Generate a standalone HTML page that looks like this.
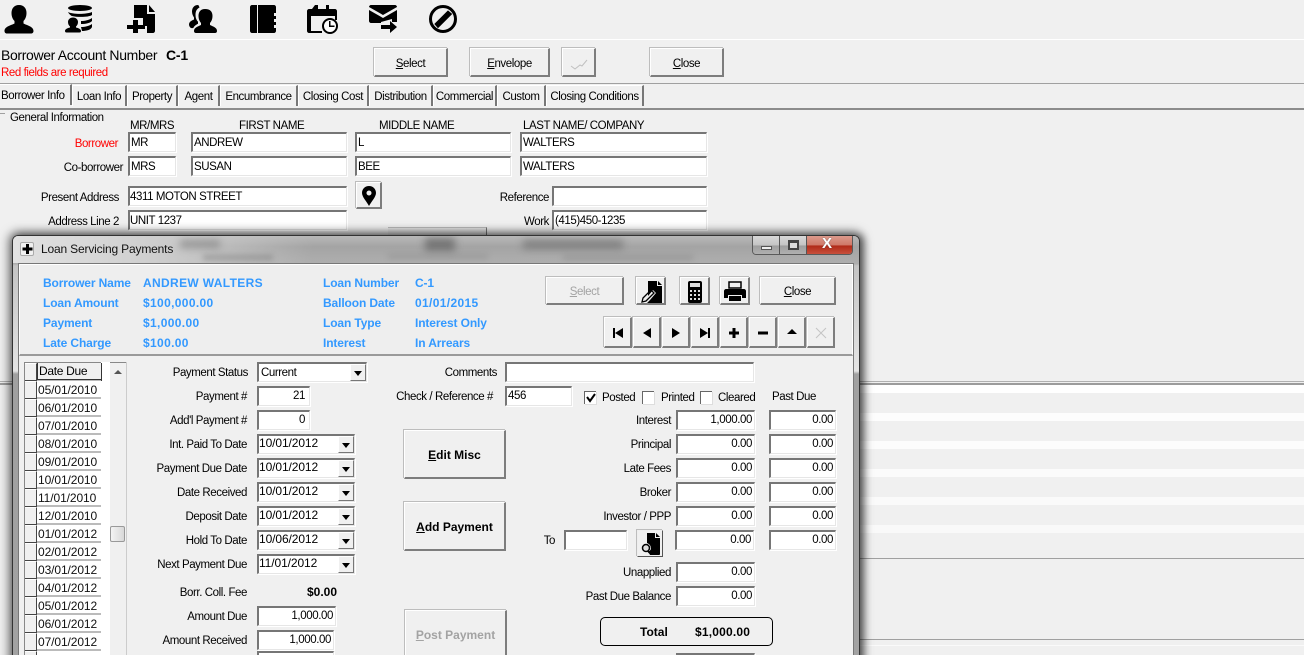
<!DOCTYPE html>
<html><head><meta charset="utf-8"><style>
html,body{margin:0;padding:0;width:1304px;height:655px;overflow:hidden}
body{background:#f0f0f0;font:11.5px/16px "Liberation Sans",sans-serif;letter-spacing:-.42px;color:#000}
div{position:absolute;box-sizing:border-box;white-space:nowrap}
#r{left:0;top:0;width:1304px;height:655px;overflow:hidden;background:#f0f0f0}
.l{width:200px;text-align:right;height:14px}
.f{background:#fff;border-top:2px solid #767676;border-left:2px solid #767676;border-right:1px solid #e6e6e6;border-bottom:1px solid #e6e6e6;box-shadow:1px 1px 0 #fff;padding-left:1px;line-height:17px;height:20px;overflow:hidden}
.t1{line-height:19px}
.n{text-align:right;padding:0 4px 0 0;letter-spacing:-.4px}
.dt{font-size:12px;letter-spacing:-.1px;padding-left:0;line-height:15px}
.b{background:#f0f0f0;border-top:1px solid #fff;border-left:1px solid #fff;border-right:2px solid #7d7d7d;border-bottom:2px solid #7d7d7d;box-shadow:-1px -1px 0 #bdbdbd;text-align:center}
.bd{font-size:12px;font-weight:bold;letter-spacing:0}
.d{color:#a3a3a3}
.ar{right:0;top:0;bottom:0;width:16px;background:#f0f0f0;border-left:1px solid #fff;border-top:1px solid #fff;border-right:1px solid #777;border-bottom:1px solid #777}
.ar:after{content:"";position:absolute;left:3px;top:6px;border:4px solid transparent;border-top:5px solid #000;border-bottom:0}
.bl{color:#3399ff;font-size:12px;line-height:14px;font-weight:bold;letter-spacing:-.12px;height:14px}
.bv{letter-spacing:.35px}
.g{left:37px;width:64px;height:18px;background:#fff;border-bottom:1px solid #bbb;border-top:1px solid #bbb;padding-left:1px;line-height:18px;color:#111;font-size:12px;letter-spacing:-.1px}
.h{left:25px;width:12px;height:18px;background:#f0f0f0;border-right:1px solid #444;border-bottom:1px solid #444;border-top:1px solid #fff}
.tb{top:85px;height:21px;background:#f0f0f0;border-top:1px solid #fff;border-left:1px solid #fff;border-right:2px solid #777;text-align:center;line-height:23px}
.cb{width:12px;height:13px;background:#fff;border-top:1px solid #666;border-left:1px solid #666;box-shadow:1px 1px 0 #ddd}
.wl{left:860px;width:444px;height:8px}
</style></head><body><div id="r">

<svg style="position:absolute;left:0;top:0" width="480" height="40" viewBox="0 0 480 40">
<path d="M19 5c-5 0-7.500 3.500-7.500 8 0 3.500 1.200 6.300 3 8v2.500c-4 2-10 3.200-10 7.500 0 1.500 1 2.500 2.500 2.500h24c1.500 0 2.500-1 2.500-2.500 0-4.300-6-5.500-10-7.500V21c1.800-1.700 3-4.500 3-8 0-4.500-2.500-8-7.500-8z"/>
<ellipse cx="80" cy="8" rx="12" ry="3"/>
<path d="M68 12c5 2.500 18 2.500 24 0v3c-3 2.200-14 2.500-20 1-1-.2-3-2-4-4zM81 21c4 0 8-1 11-3v3c-2 2-6 3-11 3zM81 27c4 0 8-1 11-3v3c-1 3-6 4-10 4z"/>
<path d="M73 17.500c-3 0-5 2-5 4.500 0 2 .8 3.500 2 4.500v1c-2.500.7-5 1.500-5 3.500 0 1 .5 1.500 1.500 1.500h13c1 0 1.500-.5 1.500-1.500 0-2-2.500-2.800-5-3.500v-1c1.200-1 2-2.500 2-4.500 0-2.500-2-4.500-5-4.500z"/>
<path d="M134 5h13v9h8v17c0 1-1 2-2 2h-6v-7h-4v-8h-9zM149 5l6 7h-6z"/>
<path d="M133 20h5v5h7v4h-7v4h-5v-4h-6v-4h6z"/>
<path d="M205 9c-4.500 0-6.500 3-6.500 7 0 3 1 5.300 2.500 7v2c-3 1.500-7 2.500-7 6 0 1.200.8 2 2 2h19c1.200 0 2-.8 2-2 0-3.500-4-4.500-7-6v-2c1.500-1.700 2.500-4 2.500-7 0-4-2-7-7.500-7z"/>
<path d="M198 5c-4 0-6 3-6 6.500 0 2.500 1 4.500 2 6v2c-2 1-5 2-5 5 0 1.500 1 3 2 3.500 1 .3 2 .2 2.500-.3.500-1.500 2.500-3 4.500-4v-2c-1.500-1.500-2.500-3.700-2.500-6.700 0-3.500 1-6 4-7.500-.5-1.500-1-2.500-1.500-2.500z"/>
<path d="M252 5h5v28h-5c-1 0-2-1-2-2V7c0-1 1-2 2-2zM258 5h16c1 0 2 1 2 2v6h-2v3h2v3h-2v3h2v3h-2v3h2v3c0 1-1 2-2 2h-16z"/>
<path fill-rule="evenodd" d="M315 5h3v4h8V5h3v4h6c1 0 2 1 2 2v9h-2v-4h-24v15h11v2h-13c-1 0-2-1-2-2V11c0-1 1-2 2-2h3z"/>
<circle cx="330" cy="26" r="7" fill="#fff" stroke="#000" stroke-width="2"/><path d="M329 21h1.500v4.500h4V27H329z"/>
<path d="M371 5h24c1 0 2 1 2 2L383 15 369 7c0-1 1-2 2-2zM369 10l14 8 14-8v12h-5v-3l-11 3v1h-10c-1 0-2-1-2-2z"/>
<path d="M381 25h9v-4l7 6-7 6v-4h-9z"/>
<circle cx="443" cy="19" r="12.500" fill="none" stroke="#000" stroke-width="3"/>
<path d="M435 24L448 11 451.500 14 438 27.500z" stroke="#000" stroke-width="1"/>
</svg>

<div style="left:0;top:39px;width:1304px;height:1px;background:#fff"></div>
<div style="left:1px;top:48px;font-size:14px;line-height:15px;letter-spacing:-.35px">Borrower Account Number</div>
<div style="left:166px;top:48px;font-size:14px;line-height:15px;font-weight:bold;letter-spacing:-.2px">C-1</div>
<div style="left:1px;top:65px;color:#f00;height:14px">Red fields are required</div>

<div class="b" style="left:374px;top:48px;width:74px;height:29px;line-height:30px"><u>S</u>elect</div>
<div class="b" style="left:470px;top:48px;width:80px;height:29px;line-height:30px"><u>E</u>nvelope</div>
<div class="b" style="left:562px;top:48px;width:34px;height:29px"><svg width="20" height="20" style="margin-top:4px" fill="none" stroke="#c0c0c0"><path d="M2 13l4 3 5-4 2 1 5-6"/></svg></div>
<div class="b" style="left:650px;top:48px;width:74px;height:29px;line-height:30px"><u>C</u>lose</div>

<div style="left:0;top:83px;width:1304px;height:1px;background:#a0a0a0"></div>
<div class="tb" style="left:0;top:84px;width:72px;border-left:0;line-height:22px;text-align:left;padding-left:1px">Borrower Info</div>
<div class="tb" style="left:72px;width:55px">Loan Info</div>
<div class="tb" style="left:127px;width:51px">Property</div>
<div class="tb" style="left:178px;width:42px">Agent</div>
<div class="tb" style="left:220px;width:78px">Encumbrance</div>
<div class="tb" style="left:298px;width:71px">Closing Cost</div>
<div class="tb" style="left:369px;width:64px">Distribution</div>
<div class="tb" style="left:433px;width:64px">Commercial</div>
<div class="tb" style="left:497px;width:49px">Custom</div>
<div class="tb" style="left:546px;width:98px">Closing Conditions</div>
<div style="left:0;top:108px;width:1304px;height:2px;background:#8c8c8c"></div>

<div style="left:0;top:113px;width:5px;height:1px;background:#a0a0a0"></div>
<div style="left:10px;top:110px;">General Information</div>
<div style="left:130px;top:118px">MR/MRS</div>
<div style="left:239px;top:118px">FIRST NAME</div>
<div style="left:379px;top:118px">MIDDLE NAME</div>
<div style="left:523px;top:118px">LAST NAME/ COMPANY</div>
<div class="l" style="left:-82px;top:136px;color:#f00">Borrower</div>
<div class="l" style="left:-77px;top:160px">Co-borrower</div>
<div class="l" style="left:-81px;top:190px">Present Address</div>
<div class="l" style="left:-81px;top:214px">Address Line 2</div>
<div class="l" style="left:349px;top:190px">Reference</div>
<div class="l" style="left:349px;top:214px">Work</div>
<div class="f t1" style="left:128px;top:132px;width:48px">MR</div>
<div class="f t1" style="left:191px;top:132px;width:156px">ANDREW</div>
<div class="f t1" style="left:355px;top:132px;width:156px">L</div>
<div class="f t1" style="left:520px;top:132px;width:187px">WALTERS</div>
<div class="f t1" style="left:128px;top:156px;width:48px">MRS</div>
<div class="f t1" style="left:191px;top:156px;width:156px">SUSAN</div>
<div class="f t1" style="left:355px;top:156px;width:156px">BEE</div>
<div class="f t1" style="left:520px;top:156px;width:187px">WALTERS</div>
<div class="f t1" style="left:128px;top:186px;width:219px;padding-left:0">4311 MOTON STREET</div>
<div class="f t1" style="left:552px;top:186px;width:155px"></div>
<div class="f t1" style="left:128px;top:210px;width:219px;padding-left:0">UNIT 1237</div>
<div class="f t1" style="left:552px;top:210px;width:155px">(415)450-1235</div>
<div class="b" style="left:356px;top:182px;width:26px;height:27px"><svg width="14" height="20" style="margin-top:3px"><path fill-rule="evenodd" d="M7 0c4 0 7 3 7 7 0 4-5 9-7 13C5 16 0 11 0 7c0-4 3-7 7-7zm0 4.500a2.500 2.500 0 1 0 .01 0z"/></svg></div>
<div style="left:388px;top:227px;width:99px;height:10px;background:#e8e8e8;border-top:1px solid #bbb;border-right:1px solid #777"></div>

<!-- lower background -->
<div style="left:0;top:381px;width:1304px;height:1px;background:#b0b0b0"></div>
<div style="left:0;top:383px;width:1304px;height:2px;background:#9c9c9c"></div>
<div class="wl" style="top:385px;background:#fff"></div>
<div class="wl" style="top:413px;background:#fdfdfd"></div>
<div class="wl" style="top:441px;background:#fcfcfc"></div>
<div class="wl" style="top:469px;background:#fbfbfb"></div>
<div class="wl" style="top:497px;background:#fafafa"></div>
<div class="wl" style="top:525px;background:#f9f9f9"></div>
<div style="left:860px;top:558px;width:444px;height:1px;background:#a0a0a0"></div>
<div style="left:860px;top:639px;width:444px;height:1px;background:#a0a0a0"></div>
<div style="left:860px;top:645px;width:444px;height:1px;background:#fafafa"></div>

<!-- window -->
<div style="left:12px;top:235px;width:848px;height:440px;border-radius:6px 6px 0 0;box-shadow:0 0 10px 3px rgba(0,0,0,.55),3px 0 8px rgba(0,0,0,.4);border:1px solid #333;background:linear-gradient(180deg,#b0b0b0 0,#a2a2a2 8px,#a8a8a8 27px,#c4c4c4 30px,#e4e4e4 135px,#a0a0a0 138px,#a2a2a2 100%)"></div>
<div style="left:13px;top:236px;width:846px;height:27px;border-radius:5px 5px 0 0;overflow:hidden;background:linear-gradient(180deg,#b8b8b8,#a4a4a4 40%,#aeaeae)">
  <div style="left:0;top:0;width:300px;height:27px;background:linear-gradient(90deg,#e2e2e2,#cfcfcf 45%,rgba(180,180,180,0))"></div>
  <div style="left:412px;top:2px;width:30px;height:13px;background:#606060;filter:blur(4px);opacity:.7"></div>
  <div style="left:510px;top:4px;width:100px;height:9px;background:#707070;filter:blur(4px);opacity:.7"></div>
  <div style="left:167px;top:4px;width:40px;height:8px;background:#777;filter:blur(4px);opacity:.6"></div>
  <div style="left:190px;top:19px;width:70px;height:5px;background:#777;filter:blur(3px);opacity:.5"></div>
  <div style="left:375px;top:18px;width:100px;height:5px;background:#888;filter:blur(3px);opacity:.4"></div>
  <div style="left:550px;top:19px;width:130px;height:5px;background:#888;filter:blur(3px);opacity:.5"></div>
</div>
<div style="left:20px;top:242px;width:14px;height:14px;background:#f0f0f0;border:1px solid #aaa;border-radius:2px"><svg width="12" height="12" style="position:absolute;left:0;top:0"><path d="M5 1h3v3.500h3.500v3H8V11H5V7.500H1.500v-3H5z" fill="#000"/></svg></div>
<div style="left:41px;top:242px;color:#111;font-size:12px;line-height:14px;letter-spacing:-.17px">Loan Servicing Payments</div>
<div style="left:752px;top:236px;width:101px;height:19px;border:1px solid #5a5a5a;border-top:0;border-radius:0 0 4px 4px;overflow:hidden">
  <div style="left:0;top:0;width:27px;height:18px;border-right:1px solid #555;background:linear-gradient(180deg,#d8d8d8,#c4c4c4 50%,#9e9e9e 55%,#b0b0b0)"></div>
  <div style="left:27px;top:0;width:27px;height:18px;border-right:1px solid #555;background:linear-gradient(180deg,#d8d8d8,#c4c4c4 50%,#9e9e9e 55%,#b0b0b0)"></div>
  <div style="left:54px;top:0;width:46px;height:18px;background:linear-gradient(180deg,#dc9a8c,#cf7868 50%,#b02a18 55%,#c8503c)"></div>
  <div style="left:8px;top:10px;width:11px;height:4px;background:#eee;border:1px solid #555"></div>
  <div style="left:35px;top:4px;width:11px;height:10px;border:2px solid #444;border-top-width:3px;background:#ddd"></div>
  <div style="left:69px;top:0;font-weight:bold;font-size:15px;color:#fff;text-shadow:0 0 1px #444">X</div>
</div>

<div style="left:18px;top:263px;width:835px;height:400px;background:#f0f0f0;border-left:1px solid #777;border-top:1px solid #777"></div>
<div style="left:19px;top:264px;width:834px;height:92px;border:1px solid #fff;border-bottom:2px solid #9a9a9a;border-top:1px solid #fff;background:#eee"></div>
<div style="left:853px;top:263px;width:1px;height:400px;background:#777"></div>

<div class="bl" style="left:43px;top:276px">Borrower Name</div>
<div class="bl" style="left:43px;top:296px">Loan Amount</div>
<div class="bl" style="left:43px;top:316px">Payment</div>
<div class="bl" style="left:43px;top:336px">Late Charge</div>
<div class="bl bv" style="left:143px;top:276px">ANDREW WALTERS</div>
<div class="bl bv" style="left:143px;top:296px">$100,000.00</div>
<div class="bl bv" style="left:143px;top:316px">$1,000.00</div>
<div class="bl bv" style="left:143px;top:336px">$100.00</div>
<div class="bl" style="left:323px;top:276px">Loan Number</div>
<div class="bl" style="left:323px;top:296px">Balloon Date</div>
<div class="bl" style="left:323px;top:316px">Loan Type</div>
<div class="bl" style="left:323px;top:336px">Interest</div>
<div class="bl" style="left:415px;top:276px">C-1</div>
<div class="bl bv" style="left:415px;top:296px">01/01/2015</div>
<div class="bl" style="left:415px;top:316px">Interest Only</div>
<div class="bl" style="left:415px;top:336px">In Arrears</div>

<div class="b d" style="left:546px;top:277px;width:78px;height:28px;line-height:29px"><u>S</u>elect</div>
<div class="b" style="left:636px;top:277px;width:30px;height:28px"><svg width="24" height="24" style="position:absolute;left:3px;top:2px"><path d="M8 1h9v5h5v17H7l3-3 6-7-3-3-5 6z"/><path d="M18 1l4 4h-4z"/><path d="M2 22l1-4 8-8 3 3-8 8z" fill="none" stroke="#000" stroke-width="1.300"/></svg></div>
<div class="b" style="left:680px;top:277px;width:30px;height:28px"><svg width="16" height="24" style="margin-top:2px"><rect x="1" y="1" width="14" height="22" rx="2"/><rect x="3" y="3" width="10" height="4" fill="#ddd"/><path d="M3 10h2v2H3zM7 10h2v2H7zM11 10h2v2h-2zM3 14h2v2H3zM7 14h2v2H7zM11 14h2v2h-2zM3 18h2v2H3zM7 18h2v2H7zM11 18h2v2h-2z" fill="#ddd"/></svg></div>
<div class="b" style="left:720px;top:277px;width:30px;height:28px"><svg width="22" height="22" style="margin-top:3px"><path d="M5 1h12v6H5z" fill="none" stroke="#000" stroke-width="1.500"/><path d="M2 8h18c1 0 2 1 2 2v7h-4v-3H4v3H0v-7c0-1 1-2 2-2z"/><path d="M5 15h12v5H5z"/></svg></div>
<div class="b" style="left:760px;top:277px;width:76px;height:28px;line-height:29px"><u>C</u>lose</div>

<div class="b" style="left:604px;top:317px;width:28px;height:31px"><svg width="12" height="10" style="margin-top:10px"><path d="M1 0h2v10H1zM11 0v10L3 5z"/></svg></div>
<div class="b" style="left:633px;top:317px;width:28px;height:31px"><svg width="10" height="10" style="margin-top:10px"><path d="M9 0v10L1 5z"/></svg></div>
<div class="b" style="left:662px;top:317px;width:28px;height:31px"><svg width="10" height="10" style="margin-top:10px"><path d="M1 0v10l8-5z"/></svg></div>
<div class="b" style="left:691px;top:317px;width:28px;height:31px"><svg width="12" height="10" style="margin-top:10px"><path d="M9 0h2v10H9zM1 0v10l8-5z"/></svg></div>
<div class="b" style="left:720px;top:317px;width:28px;height:31px"><svg width="10" height="10" style="margin-top:10px"><path d="M3.500 0h3v3.500H10v3H6.500V10h-3V6.500H0v-3h3.500z"/></svg></div>
<div class="b" style="left:749px;top:317px;width:28px;height:31px"><svg width="10" height="10" style="margin-top:10px"><path d="M0 3.500h10v3H0z"/></svg></div>
<div class="b" style="left:778px;top:317px;width:28px;height:31px"><svg width="12" height="10" style="margin-top:10px"><path d="M6 1l5 5H1z"/></svg></div>
<div class="b" style="left:807px;top:317px;width:28px;height:31px"><svg width="12" height="12" style="margin-top:9px" fill="none" stroke="#c4c4c4"><path d="M1 1l10 10M11 1L1 11"/></svg></div>

<!-- grid -->
<div style="left:24px;top:362px;width:1px;height:293px;background:#888"></div>
<div style="left:24px;top:362px;width:103px;height:1px;background:#888"></div>
<div style="left:101px;top:362px;width:9px;height:293px;background:#fff"></div>
<div style="left:126px;top:362px;width:1px;height:293px;background:#ccc"></div>
<div class="h" style="top:363px"></div>
<div style="left:37px;top:363px;width:65px;height:18px;background:#f0f0f0;border-right:1px solid #333;border-bottom:2px solid #333;border-left:1px solid #333;padding-left:1px;line-height:17px;font-size:12px;letter-spacing:-.3px">Date Due</div>
<div class="h" style="top:381px"></div><div class="g" style="top:380px">05/01/2010</div>
<div class="h" style="top:399px"></div><div class="g" style="top:398px">06/01/2010</div>
<div class="h" style="top:417px"></div><div class="g" style="top:416px">07/01/2010</div>
<div class="h" style="top:435px"></div><div class="g" style="top:434px">08/01/2010</div>
<div class="h" style="top:453px"></div><div class="g" style="top:452px">09/01/2010</div>
<div class="h" style="top:471px"></div><div class="g" style="top:470px">10/01/2010</div>
<div class="h" style="top:489px"></div><div class="g" style="top:488px">11/01/2010</div>
<div class="h" style="top:507px"></div><div class="g" style="top:506px">12/01/2010</div>
<div class="h" style="top:525px"></div><div class="g" style="top:524px">01/01/2012</div>
<div class="h" style="top:543px"></div><div class="g" style="top:542px">02/01/2012</div>
<div class="h" style="top:561px"></div><div class="g" style="top:560px">03/01/2012</div>
<div class="h" style="top:579px"></div><div class="g" style="top:578px">04/01/2012</div>
<div class="h" style="top:597px"></div><div class="g" style="top:596px">05/01/2012</div>
<div class="h" style="top:615px"></div><div class="g" style="top:614px">06/01/2012</div>
<div class="h" style="top:633px"></div><div class="g" style="top:632px">07/01/2012</div>
<div class="h" style="top:651px"></div><div class="g" style="top:650px"></div>
<div style="left:114px;top:370px;border:4px solid transparent;border-bottom:4px solid #555;border-top:0"></div>
<div style="left:110px;top:526px;width:15px;height:16px;background:linear-gradient(90deg,#f4f4f4,#d8d8d8);border:1px solid #999;border-radius:2px"></div>

<!-- left labels -->
<div class="l" style="left:48px;top:365px">Payment Status</div>
<div class="l" style="left:47px;top:389px">Payment #</div>
<div class="l" style="left:47px;top:413px">Add'l Payment #</div>
<div class="l" style="left:47px;top:437px">Int. Paid To Date</div>
<div class="l" style="left:47px;top:461px">Payment Due Date</div>
<div class="l" style="left:47px;top:485px">Date Received</div>
<div class="l" style="left:47px;top:509px">Deposit Date</div>
<div class="l" style="left:47px;top:533px">Hold To Date</div>
<div class="l" style="left:47px;top:557px">Next Payment Due</div>
<div class="l" style="left:47px;top:585px">Borr. Coll. Fee</div>
<div class="l" style="left:137px;top:585px;font-weight:bold;font-size:12px;line-height:14px;letter-spacing:0">$0.00</div>
<div class="l" style="left:47px;top:609px">Amount Due</div>
<div class="l" style="left:47px;top:633px">Amount Received</div>

<div class="f t1" style="left:257px;top:362px;width:110px;padding-left:2px">Current<div class="ar"></div></div>
<div class="f n" style="left:257px;top:386px;width:53px">21</div>
<div class="f n" style="left:257px;top:410px;width:53px">0</div>
<div class="f dt" style="left:257px;top:434px;width:98px">10/01/2012<div class="ar"></div></div>
<div class="f dt" style="left:257px;top:458px;width:98px">10/01/2012<div class="ar"></div></div>
<div class="f dt" style="left:257px;top:482px;width:98px">10/01/2012<div class="ar"></div></div>
<div class="f dt" style="left:257px;top:506px;width:98px">10/01/2012<div class="ar"></div></div>
<div class="f dt" style="left:257px;top:530px;width:98px">10/06/2012<div class="ar"></div></div>
<div class="f dt" style="left:257px;top:554px;width:98px">11/01/2012<div class="ar"></div></div>
<div class="f n" style="left:257px;top:606px;width:79px;padding-right:2px">1,000.00</div>
<div class="f n" style="left:257px;top:630px;width:77px;padding-right:2px">1,000.00</div>
<div class="f n" style="left:257px;top:651px;width:77px;padding-right:2px">100,000.00</div>

<!-- middle -->
<div class="l" style="left:297px;top:365px">Comments</div>
<div class="l" style="left:293px;top:389px">Check / Reference #</div>
<div class="f" style="left:505px;top:362px;width:249px"></div>
<div class="f" style="left:505px;top:386px;width:67px">456</div>
<div class="cb" style="left:584px;top:391px"><svg width="11" height="12" style="position:absolute;left:0;top:0"><path d="M2 5l3 4 5-7" fill="none" stroke="#000" stroke-width="2"/></svg></div>
<div style="left:602px;top:390px">Posted</div>
<div class="cb" style="left:642px;top:391px"></div>
<div style="left:661px;top:390px">Printed</div>
<div class="cb" style="left:700px;top:391px"></div>
<div style="left:718px;top:390px">Cleared</div>
<div style="left:772px;top:389px">Past Due</div>

<div class="b bd" style="left:404px;top:430px;width:102px;height:49px;line-height:48px"><u>E</u>dit Misc</div>
<div class="b bd" style="left:404px;top:502px;width:102px;height:49px;line-height:48px"><u>A</u>dd Payment</div>
<div class="b d bd" style="left:405px;top:610px;width:102px;height:49px;line-height:49px"><u>P</u>ost Payment</div>

<div class="l" style="left:471px;top:413px">Interest</div>
<div class="l" style="left:471px;top:437px">Principal</div>
<div class="l" style="left:471px;top:461px">Late Fees</div>
<div class="l" style="left:471px;top:485px">Broker</div>
<div class="l" style="left:471px;top:509px">Investor / PPP</div>
<div class="l" style="left:355px;top:533px">To</div>
<div class="l" style="left:471px;top:565px">Unapplied</div>
<div class="l" style="left:471px;top:589px">Past Due Balance</div>

<div class="f n" style="left:676px;top:410px;width:79px;padding-right:2px">1,000.00</div>
<div class="f n" style="left:676px;top:434px;width:79px;padding-right:2px">0.00</div>
<div class="f n" style="left:676px;top:458px;width:79px;padding-right:2px">0.00</div>
<div class="f n" style="left:676px;top:482px;width:79px;padding-right:2px">0.00</div>
<div class="f n" style="left:676px;top:506px;width:79px;padding-right:2px">0.00</div>
<div class="f n" style="left:675px;top:530px;width:79px;padding-right:2px">0.00</div>
<div class="f n" style="left:676px;top:562px;width:79px;padding-right:2px">0.00</div>
<div class="f n" style="left:676px;top:586px;width:79px;padding-right:2px">0.00</div>
<div class="f n" style="left:769px;top:410px;width:67px;padding-right:2px">0.00</div>
<div class="f n" style="left:769px;top:434px;width:67px;padding-right:2px">0.00</div>
<div class="f n" style="left:769px;top:458px;width:67px;padding-right:2px">0.00</div>
<div class="f n" style="left:769px;top:482px;width:67px;padding-right:2px">0.00</div>
<div class="f n" style="left:769px;top:506px;width:67px;padding-right:2px">0.00</div>
<div class="f n" style="left:769px;top:530px;width:67px;padding-right:2px">0.00</div>
<div class="f" style="left:564px;top:530px;width:63px"></div>
<div class="b" style="left:637px;top:530px;width:26px;height:27px;border-left:1px solid #eee;border-top:1px solid #eee;border-right:1px solid #555;border-bottom:1px solid #555"><svg width="24" height="24" style="position:absolute;left:1px;top:1px"><path d="M8 1h8v5h5v16c0 1-1 1-1 1H11l-1-3 2-3c0-4-2-5-4-6z"/><path d="M17 1l4 4h-4z"/><circle cx="7" cy="16" r="3.500" fill="#ddd" stroke="#000" stroke-width="1.500"/><path d="M9 19l3 3" stroke="#000" stroke-width="2"/></svg></div>
<div style="left:600px;top:617px;width:173px;height:29px;border:1px solid #000;border-radius:5px;background:#f0f0f0"></div>
<div style="left:640px;top:625px;font-weight:bold;font-size:12px;line-height:14px;letter-spacing:0">Total</div>
<div style="left:695px;top:625px;font-weight:bold;font-size:12px;line-height:14px;letter-spacing:.2px">$1,000.00</div>
<div class="f" style="left:676px;top:653px;width:79px"></div>

</div></body></html>
